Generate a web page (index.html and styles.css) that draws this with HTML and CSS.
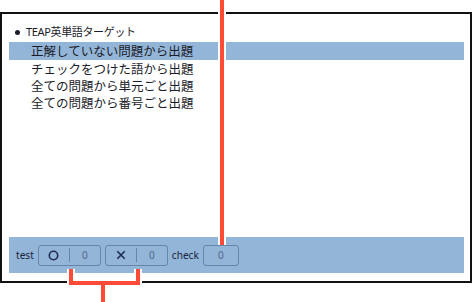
FILE: index.html
```html
<!DOCTYPE html>
<html lang="ja">
<head>
<meta charset="utf-8">
<link rel="stylesheet" href="styles.css">
</head>
<body>
<div class="page">
  <div class="frame">
    <div class="title"><span class="bullet"></span><span>TEAP英単語ターゲット</span></div>
    <ul class="menu">
      <li class="item selected">正解していない問題から出題</li>
      <li class="item">チェックをつけた語から出題</li>
      <li class="item">全ての問題から単元ごと出題</li>
      <li class="item">全ての問題から番号ごと出題</li>
    </ul>
    <div class="bar">
      <span class="label">test</span>
      <div class="box">
        <span class="cell">
          <svg width="11" height="11" viewBox="0 0 11 11"><circle cx="5.5" cy="5.5" r="4.2" fill="none" stroke="#1e2c55" stroke-width="1.6"/></svg>
        </span>
        <span class="divider"></span>
        <span class="cell num">0</span>
      </div>
      <div class="box">
        <span class="cell">
          <svg width="10" height="10" viewBox="0 0 10 10"><path d="M1.3 1.3 L8.7 8.7 M8.7 1.3 L1.3 8.7" stroke="#1e2c55" stroke-width="1.6" fill="none"/></svg>
        </span>
        <span class="divider"></span>
        <span class="cell num">0</span>
      </div>
      <span class="label">check</span>
      <div class="box single"><span class="num">0</span></div>
    </div>
  </div>
  <svg class="callouts" width="474" height="302" viewBox="0 0 474 302">
    <g fill="none" stroke="#ffffff" stroke-width="8" stroke-linejoin="miter" stroke-linecap="butt">
      <path d="M222 0 V245"/>
      <path d="M71 269 V283 H138 V269"/>
      <path d="M103 283 V302"/>
    </g>
    <g fill="none" stroke="#fd4b38" stroke-width="4" stroke-linejoin="miter" stroke-linecap="butt">
      <path d="M222 0 V245"/>
      <path d="M71 269 V283 H138 V269"/>
      <path d="M103 283 V302"/>
    </g>
  </svg>
</div>
</body>
</html>
```
FILE: styles.css
```css
* { box-sizing: border-box; }
html, body {
  margin: 0;
  padding: 0;
  background: #ffffff;
}
body {
  font-family: "Noto Sans", "Noto Sans CJK JP", sans-serif;
  color: #1b1c2a;
}
.page {
  position: relative;
  width: 474px;
  height: 302px;
  overflow: hidden;
  padding-top: 12px;
}
.frame {
  width: 472px;
  height: 271px;
  border: 2px solid #121212;
  display: flex;
  flex-direction: column;
}
.title {
  display: flex;
  align-items: center;
  height: 14px;
  margin: 11px 0 3px 0;
  padding-left: 13px;
  font-size: 11px;
  line-height: 14px;
  letter-spacing: -0.35px;
  font-family: "Noto Sans", "Noto Sans CJK JP", sans-serif;
  color: #1b1c2a;
}
.bullet {
  width: 5px;
  height: 5px;
  border-radius: 50%;
  background: #1b1c2a;
  margin-right: 6px;
}
.menu {
  list-style: none;
  margin: 0 6px 0 7px;
  padding: 0;
  flex: 1;
}
.item {
  height: 17px;
  line-height: 17px;
  padding-left: 22px;
  font-size: 12.5px;
  font-family: "Noto Sans CJK JP", sans-serif;
  color: #1b1c2a;
}
.item.selected {
  height: 18px;
  line-height: 18px;
  background: #93b5d7;
}
.bar {
  height: 36px;
  margin: 0 6px 8px 7px;
  background: #93b5d7;
  display: flex;
  align-items: center;
  gap: 4px;
  padding-left: 7px;
}
.label {
  font-size: 10.1px;
  color: #1b2440;
  line-height: 14px;
}
.box {
  height: 21px;
  width: 63px;
  border: 1px solid #6784a9;
  border-radius: 3px;
  display: flex;
  align-items: center;
}
.box.single {
  width: 36px;
  justify-content: center;
}
.cell {
  flex: 1;
  display: flex;
  align-items: center;
  justify-content: center;
  height: 100%;
}
.divider {
  width: 1px;
  height: 14px;
  background: #6784a9;
}
.num {
  font-size: 10px;
  color: #4f6788;
}
.callouts {
  position: absolute;
  top: 0;
  left: 0;
  pointer-events: none;
}
```
